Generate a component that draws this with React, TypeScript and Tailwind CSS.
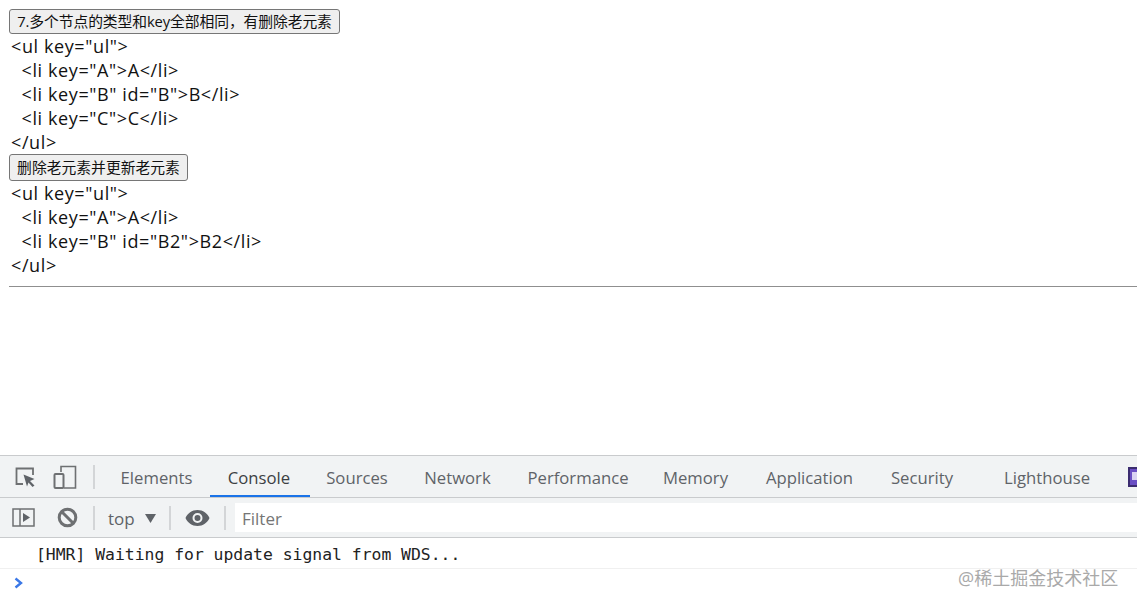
import React from 'react';

const sans = "font-['Open_Sans','Noto_Sans_CJK_SC',sans-serif]";

const tabs = [
  { name: 'Elements', w: 'w-[107px]' },
  { name: 'Console', w: 'w-[100px]', active: true },
  { name: 'Sources', w: 'w-[94px]' },
  { name: 'Network', w: 'w-[107px]' },
  { name: 'Performance', w: 'w-[134px]' },
  { name: 'Memory', w: 'w-[101px]' },
  { name: 'Application', w: 'w-[127px]' },
  { name: 'Security', w: 'w-[98px]' },
  { name: 'Lighthouse', w: 'w-[152px]' },
];

function CodeLine({ text }: { text: string }) {
  return <div className="h-6 leading-6 whitespace-pre pl-[2px] text-[18px] tracking-[0.6px] text-[#111]">{text}</div>;
}

function PageButton({ label, w }: { label: string; w: string }) {
  return (
    <button className={`${w} block border border-[#767676] rounded-[3px] bg-[#efefef] text-[14.8px] text-[#111] text-center whitespace-nowrap`}>
      {label}
    </button>
  );
}

function Divider() {
  return <div className="w-[2px] h-[24px] bg-[#d3d5d7] shrink-0" />;
}

export default function App() {
  return (
    <div className={`${sans} w-[1137px] h-[607px] overflow-hidden bg-white relative flex flex-col`}>
      <div className="h-[455px] pl-[9px] pt-[9px]">
        <PageButton label="7.多个节点的类型和key全部相同，有删除老元素" w="w-[331px] h-[25px] tracking-[-0.1px]" />
        <CodeLine text={'<ul key="ul">'} />
        <CodeLine text={'  <li key="A">A</li>'} />
        <CodeLine text={'  <li key="B" id="B">B</li>'} />
        <CodeLine text={'  <li key="C">C</li>'} />
        <CodeLine text={'</ul>'} />
        <PageButton label="删除老元素并更新老元素" w="w-[179px] h-[27px]" />
        <CodeLine text={'<ul key="ul">'} />
        <CodeLine text={'  <li key="A">A</li>'} />
        <CodeLine text={'  <li key="B" id="B2">B2</li>'} />
        <CodeLine text={'</ul>'} />
        <div className="h-px bg-[#8f8f8f] mt-[9px]" />
      </div>

      <div className="h-[43px] border-y border-y-[#c9cbcd] bg-[#f1f3f4] flex items-center">
        <div className="w-[93px] flex items-center shrink-0 pl-[14px] gap-[17px]">
          <svg width="22" height="22" viewBox="0 0 22 22" fill="none">
            <path d="M9 18H2.500V2.500H19V9" stroke="#6e7072" strokeWidth="1.800" />
            <path d="M9.500 8.500L20.500 13L16 15L20.500 19.500L18.500 21L14.500 16.500L13 20.500Z" fill="#5f6368" />
          </svg>
          <svg width="24" height="24" viewBox="0 0 24 24" fill="none">
            <path d="M8 7V1.500H22.500V23H11" stroke="#6e7072" strokeWidth="1.600" />
            <rect x="1.500" y="9" width="9" height="14" rx="1" stroke="#6e7072" strokeWidth="2" />
          </svg>
        </div>
        <Divider />
        <div className="flex h-full pl-[8px]">
          {tabs.map(t => (
            <div
              key={t.name}
              className={`${t.w} shrink-0 h-full flex items-center justify-center text-[16.7px] ${
                t.active ? 'text-[#3c4043] border-b-2 border-b-[#1a73e8] pt-[4px] pr-[2px]' : 'text-[#5f6368] pt-[2px]'
              }`}
            >
              {t.name}
            </div>
          ))}
          <div className="ml-[5px] w-[16px] h-[20px] mt-[11px] bg-[#6a4fc4] border-2 border-[#3b2c70] shrink-0 pl-[2px] pt-[3px]">
            <div className="w-[6px] h-[8px] bg-[#d9d2f2]" />
          </div>
        </div>
      </div>

      <div className="h-[40px] border-b border-b-[#c9cbcd] bg-[#f1f3f4] flex items-center">
        <div className="w-[93px] flex items-center shrink-0 pl-[12px] gap-[22px]">
          <svg width="23" height="19" viewBox="0 0 23 19" fill="none">
            <rect x="1" y="1" width="21" height="17" stroke="#6e7072" strokeWidth="1.500" />
            <path d="M8 1V18" stroke="#6e7072" strokeWidth="1.500" />
            <path d="M11 5L18 9.500L11 14Z" fill="#5f6368" />
          </svg>
          <svg width="21" height="21" viewBox="0 0 21 21" fill="none">
            <circle cx="10.500" cy="10.500" r="8.300" stroke="#6e7072" strokeWidth="3" />
            <path d="M4.500 4.500L16.500 16.500" stroke="#6e7072" strokeWidth="3" />
          </svg>
        </div>
        <Divider />
        <div className="w-[74px] shrink-0 flex items-center pl-[13px] gap-[10px] pt-[2px] text-[17px] text-[#5f6368]">
          <span>top</span>
          <svg width="11" height="9" viewBox="0 0 11 9">
            <path d="M0 0H11L5.500 9Z" fill="#5f6368" />
          </svg>
        </div>
        <Divider />
        <div className="w-[53px] shrink-0 flex items-center justify-center">
          <svg width="25" height="16" viewBox="0 0 25 16">
            <path
              fillRule="evenodd"
              d="M12.500 0C7 0 2.500 3.300 0.500 8C2.500 12.700 7 16 12.500 16C18 16 22.500 12.700 24.500 8C22.500 3.300 18 0 12.500 0ZM12.500 13A5 5 0 1 1 12.500 3A5 5 0 0 1 12.500 13ZM12.500 5A3 3 0 1 0 12.500 11A3 3 0 0 0 12.500 5Z"
              fill="#5f6368"
            />
          </svg>
        </div>
        <Divider />
        <div className="ml-[9px] flex-1 h-[29px] bg-white pl-[7px] pt-[2px] flex items-center text-[17px] text-[#757575]">Filter</div>
      </div>

      <div className="h-[31px] border-b border-b-[#f0f0f0] pl-[36px] pt-[5px] flex items-center font-['DejaVu_Sans_Mono',monospace] text-[16.4px] text-[#222] whitespace-pre">
        [HMR] Waiting for update signal from WDS...
      </div>
      <div className="pl-[14px] pt-[8px]">
        <svg width="10" height="12" viewBox="0 0 10 12" fill="none">
          <path d="M1.500 1.500L7 6L1.500 10.500" stroke="#3b78e7" strokeWidth="2.400" />
        </svg>
      </div>

      <div className="absolute left-[958px] top-[566px] text-[18px] leading-6 text-[#a9a9a9] whitespace-nowrap">@稀土掘金技术社区</div>
    </div>
  );
}
